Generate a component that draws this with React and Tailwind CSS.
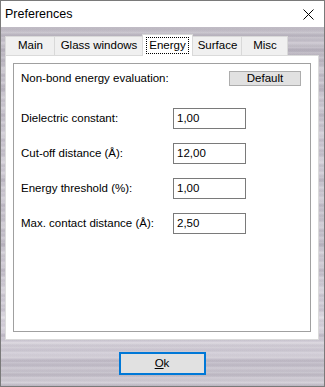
import React from 'react';

const metal =
  'bg-[repeating-linear-gradient(180deg,rgba(255,255,255,0.16)_0px,rgba(255,255,255,0)_2px,rgba(70,60,80,0.05)_3px,rgba(255,255,255,0)_5px),repeating-linear-gradient(180deg,rgba(255,255,255,0)_0px,rgba(255,255,255,0.18)_4px,rgba(60,50,70,0.06)_9px,rgba(255,255,255,0)_13px),repeating-linear-gradient(180deg,rgba(80,70,90,0.05)_0px,rgba(255,255,255,0.14)_11px,rgba(255,255,255,0)_23px,rgba(80,70,90,0.07)_31px),linear-gradient(180deg,#bab5c0_0%,#cbc6d1_35%,#c3bec9_60%,#d5d0db_82%,#c0bbc6_100%)]';

const tabs = [
  { label: 'Main', w: 'w-[50px]' },
  { label: 'Glass windows', w: 'w-[89px]' },
  { label: 'Energy', w: 'w-[51px]', active: true },
  { label: 'Surface', w: 'w-[50px]' },
  { label: 'Misc', w: 'w-[47px]' },
];

const fields = [
  { label: 'Dielectric constant:', value: '1,00' },
  { label: 'Cut-off distance (Å):', value: '12,00' },
  { label: 'Energy threshold (%):', value: '1,00' },
  { label: 'Max. contact distance (Å):', value: '2,50' },
];

export default function App() {
  return (
    <div className="w-[325px] h-[387px] border border-[#7a7a7a] flex flex-col font-['Liberation_Sans',Arial,sans-serif] text-[11.5px] text-black overflow-hidden">
      {/* Title bar */}
      <div className="h-[26px] bg-white flex items-center justify-between pl-[4px] pr-[10px] shrink-0">
        <span className="text-[12.5px]">Preferences</span>
        <svg width="11" height="11" viewBox="0 0 11 11">
          <path d="M0.5 0.5 L10.5 10.5 M10.5 0.5 L0.5 10.5" stroke="#000" strokeWidth="1" />
        </svg>
      </div>

      {/* Body */}
      <div className={`flex-1 flex flex-col pl-[4px] pr-[5px] ${metal}`}>
        {/* Tabs */}
        <div className="h-[28px] flex items-end">
          {tabs.map((t) =>
            t.active ? (
              <div
                key={t.label}
                className={`${t.w} h-[22px] -mb-px -ml-px relative z-10 bg-white border border-b-0 border-[#d9d9d9] flex items-center justify-center`}
              >
                <span className="px-[2px] leading-[15px] border border-dotted border-black">{t.label}</span>
              </div>
            ) : (
              <div
                key={t.label}
                className={`${t.w} h-[19px] bg-[#f0f0f0] border border-b-0 border-[#d9d9d9] -ml-px first:ml-0 flex items-center justify-center pl-px`}
              >
                {t.label}
              </div>
            )
          )}
        </div>

        {/* Panel */}
        <div className="w-[314px] h-[285px] bg-white border border-[#dadada] p-[7px]">
          <div className="h-full border border-[#a0a0a0] pl-[7px] pr-[9px] pt-[7px]">
            <div className="h-[15px] flex items-center justify-between">
              <span>Non-bond energy evaluation:</span>
              <button className="w-[72px] h-[15px] bg-[#e1e1e1] border border-[#adadad] flex items-center justify-center leading-none">
                Default
              </button>
            </div>
            <div className="mt-[22px] flex flex-col gap-[14px]">
              {fields.map((f) => (
                <div key={f.label} className="h-[21px] flex items-center">
                  <span className="w-[152px]">{f.label}</span>
                  <div className="w-[73px] h-[21px] border border-[#7a7a7a] bg-white flex items-center pl-[3px]">
                    {f.value}
                  </div>
                </div>
              ))}
            </div>
          </div>
        </div>

        {/* Footer */}
        <div className="flex-1 flex items-start justify-center pt-[12px]">
          <button className="w-[87px] h-[23px] bg-[#e1e1e1] border-2 border-[#0078d7] flex items-center justify-center">
            <span><span className="underline">O</span>k</span>
          </button>
        </div>
      </div>
    </div>
  );
}
